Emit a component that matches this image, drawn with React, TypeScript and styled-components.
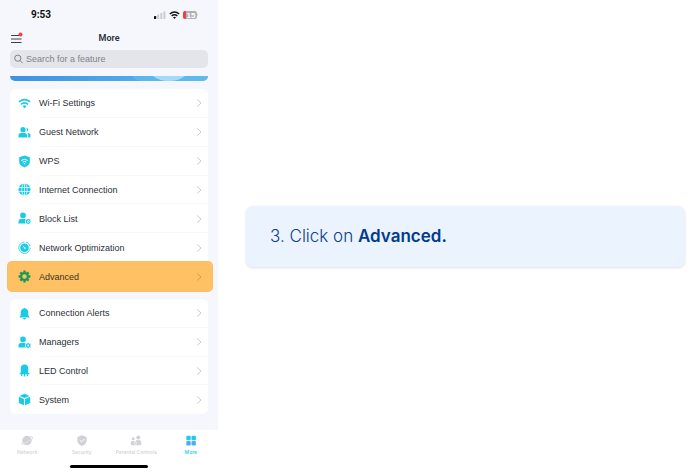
import React from "react";
import styled, { createGlobalStyle } from "styled-components";

const GlobalStyle = createGlobalStyle`
  * { box-sizing: border-box; }
  body {
    margin: 0;
    background: #fff;
    font-family: Inter, "Liberation Sans", sans-serif;
    color: #2c3038;
  }
  button, input { font: inherit; color: inherit; }
`;

const headingFont = `Roboto, "Liberation Sans", sans-serif`;
const appFont = `"Liberation Sans", Arial, sans-serif`;

const Page = styled.main`
  display: grid;
  grid-template-columns: 218px 1fr;
  column-gap: 28px;
  min-height: 100vh;
  padding-right: 3px;
`;

const Phone = styled.section`
  display: flex;
  flex-direction: column;
  background: #f5f7fc;
  font-family: ${appFont};
`;

const StatusBar = styled.div`
  display: flex;
  justify-content: space-between;
  align-items: center;
  height: 30px;
  padding: 0 19px 0 31px;
`;

const Clock = styled.span`
  font-family: ${headingFont};
  font-size: 10px;
  line-height: 12px;
  font-weight: 700;
  color: #111;
`;

const StatusIcons = styled.span`
  display: flex;
  align-items: center;
  gap: 3px;
`;

const Header = styled.header`
  display: grid;
  grid-template-columns: 1fr auto 1fr;
  align-items: center;
  height: 16px;
  margin-bottom: 4px;
  padding: 0 10px;
`;

const Title = styled.h1`
  margin: 0;
  font-family: ${headingFont};
  font-size: 9px;
  line-height: 16px;
  font-weight: 600;
`;

const MenuButton = styled.button`
  display: flex;
  width: 16px;
  padding: 0;
  border: 0;
  background: none;
`;

const SearchBox = styled.label`
  display: flex;
  align-items: center;
  gap: 3px;
  height: 18px;
  margin: 0 10px;
  padding: 0 4px;
  border-radius: 5px;
  background: #e4e5ea;
`;

const SearchInput = styled.input`
  flex: 1;
  min-width: 0;
  padding: 0;
  border: 0;
  outline: 0;
  background: none;
  font-size: 9px;
  line-height: 14px;
  &::placeholder { color: #808288; opacity: 1; }
`;

const Banner = styled.div`
  height: 5px;
  margin: 8px 10px;
  border-radius: 0 0 5px 5px;
  overflow: hidden;
  display: flex;
`;

const Card = styled.nav<{ $height: number }>`
  display: grid;
  grid-auto-rows: 1fr;
  min-height: ${(p) => p.$height}px;
  margin: 0 10px;
  border-radius: 6px;
  background: #fff;
  & + & { margin-top: 8px; }
`;

const Row = styled.button<{ $active?: boolean }>`
  position: relative;
  display: flex;
  align-items: center;
  gap: 8px;
  padding: 0 6px 0 8px;
  border: 0;
  background: none;
  text-align: left;
  font-size: 9px;
  line-height: 14px;

  &:not(:last-child)::after {
    content: "";
    position: absolute;
    left: 29px;
    right: 0;
    bottom: 0;
    height: 1px;
    background: #f7f7f9;
  }

  ${(p) =>
    p.$active &&
    `
    margin: 0 -4px 0 -2px;
    padding: 0 10px;
    border-radius: 4px;
    background: #ffc164;
    box-shadow: 0 0 0 1px #f8bd66;
    color: #3b3424;
  `}
`;

const RowLabel = styled.span`
  flex: 1;
`;

const TabBar = styled.nav`
  display: grid;
  grid-template-columns: repeat(4, 1fr);
  height: 31px;
  margin-top: auto;
  padding-top: 5px;
  background: #fff;
  font-family: Inter, sans-serif;
`;

const Tab = styled.button<{ $active?: boolean }>`
  display: flex;
  flex-direction: column;
  align-items: center;
  gap: 2px;
  padding: 0;
  border: 0;
  background: none;
  font-size: 5px;
  line-height: 8px;
  font-weight: 500;
  white-space: nowrap;
  color: ${(p) => (p.$active ? "#27c8ea" : "#d0d2d6")};
`;

const HomeArea = styled.div`
  display: flex;
  justify-content: center;
  height: 11px;
  padding-top: 4px;
  background: #fff;
`;

const HomeIndicator = styled.span`
  width: 78px;
  height: 3px;
  border-radius: 2px;
  background: #000;
`;

const Callout = styled.section`
  align-self: start;
  margin-top: 206px;
  padding: 18px 24px 19px;
  border-radius: 7px;
  background: #ebf3fe;
  box-shadow: 0 1px 3px #00000020;
`;

const Instruction = styled.p`
  margin: 0;
  font-size: 17px;
  line-height: 24px;
  font-weight: 300;
  color: #0d408c;
  strong { font-weight: 600; color: #033b8c; }
`;

const CYAN = "#19cbe5";

const WifiShape = () => (
  <g fill="none" stroke="currentColor" strokeWidth="1.6">
    <path d="M1 4.8Q6.500 0.400 12 4.800" />
    <path d="M3 7.300Q6.500 4.300 10 7.300" />
    <path d="M4.500 9L6.500 11.200L8.500 9Q6.500 7.500 4.500 9Z" fill="currentColor" stroke="none" />
  </g>
);

const Person = () => (
  <>
    <circle cx="5" cy="3.400" r="2.800" />
    <path d="M0.500 11.600V9.500Q0.500 7 3 7H7.200Q7.800 7.600 7.200 9Q6.800 10.600 7.800 11.600Z" />
  </>
);

const shapes: Record<string, React.ReactNode> = {
  wifi: <WifiShape />,
  guest: (
    <>
      <circle cx="5" cy="3.700" r="2.600" />
      <path d="M.5 11.500V9.600Q.5 7 3.200 7H6.400Q9 7 9 9.600V11.500Z" />
      <path d="M8.500 1.700A2.100 2.100 0 0 1 8.600 5.800Q9.300 3.700 8.500 1.700ZM9.500 7Q12.500 7 12.500 9.600V11.500H10.200V9.400Q10.200 7.900 9.500 7Z" />
    </>
  ),
  wps: (
    <>
      <path d="M6.500 .5L11.800 2.200V7Q11.800 10.200 6.500 12.500Q1.200 10.200 1.200 7V2.200Z" />
      <path d="M3.200 5.500Q6.500 3 9.800 5.500M4.700 7.200Q6.500 5.800 8.300 7.200" fill="none" stroke="#fff" />
      <circle cx="6.500" cy="8.700" r=".8" fill="#fff" />
    </>
  ),
  globe: (
    <>
      <circle cx="6.500" cy="6.500" r="6" />
      <g fill="none" stroke="#fff" strokeWidth=".7">
        <ellipse cx="6.500" cy="6.500" rx="2.700" ry="6.300" />
        <path d="M6.500 0V13M0 4.500H13M0 8.500H13" />
      </g>
    </>
  ),
  block: (
    <>
      <Person />
      <circle cx="10.200" cy="9.500" r="1.900" fill="none" stroke="currentColor" strokeWidth="1.100" />
      <path d="M9 8.300L11.500 10.800" stroke="currentColor" />
    </>
  ),
  optimize: (
    <>
      <circle cx="6.500" cy="6.800" r="4.300" />
      <path d="M6.500 1A5.700 5.700 0 1 0 12.200 6.800M8 1A5.800 5.800 0 0 1 12 5" fill="none" stroke="currentColor" strokeWidth=".8" />
      <path d="M4.500 4.300L7 6.300A.8 .8 0 1 1 6.200 7.300Z" fill="#fff" />
    </>
  ),
  gear: (
    <>
      <circle cx="6.500" cy="6.500" r="3.400" fill="none" stroke="currentColor" strokeWidth="2.200" />
      <path
        d="M6.500 .6V2.500M6.500 10.500V12.400M.6 6.500H2.500M10.500 6.500H12.400M2.350 2.350L3.700 3.700M9.300 9.300L10.650 10.650M2.350 10.650L3.700 9.300M9.300 3.700L10.650 2.350"
        stroke="currentColor"
        strokeWidth="2.300"
      />
    </>
  ),
  bell: (
    <>
      <path d="M5.700 1.500Q6.500 .2 7.300 1.500Q10.300 2.200 10.300 5.700V8.200L11.500 10.400H1.500L2.700 8.200V5.700Q2.700 2.200 5.700 1.500Z" />
      <path d="M4.800 11H8.200Q7.800 12.400 6.500 12.400Q5.200 12.400 4.800 11Z" />
    </>
  ),
  manager: (
    <>
      <Person />
      <circle cx="10.200" cy="9.500" r="1.700" fill="none" stroke="currentColor" strokeWidth="1.300" />
      <path d="M10.200 6.900V12.100M7.950 8.200L12.450 10.800M12.450 8.200L7.950 10.800" stroke="currentColor" strokeWidth=".9" />
      <circle cx="10.200" cy="9.500" r="1" fill="#fff" />
    </>
  ),
  led: (
    <>
      <path d="M2.800 9V4.400Q2.800 .5 6.500 .5Q10.200 .5 10.200 4.400V9H11.300V10.300H1.700V9Z" />
      <path d="M3.700 10V12M6.500 10V12.500M9.300 10V12" stroke="currentColor" strokeWidth="1.200" />
    </>
  ),
  system: (
    <>
      <path d="M6.500 .7L11.500 2.900L6.500 5.100L1.500 2.900Z" />
      <path d="M.8 3.800L6 6.100V12.300L.8 9.900ZM12.200 3.800L7 6.100V12.300L12.200 9.900Z" />
    </>
  ),
};

const RowIcon = ({ name, color = CYAN }: { name: string; color?: string }) => (
  <svg width="13" height="13" viewBox="0 0 13 13" fill="currentColor" color={color} aria-hidden="true">
    {shapes[name]}
  </svg>
);

const Chevron = ({ color = "#c9cbd0" }: { color?: string }) => (
  <svg width="6" height="8" viewBox="0 0 6 8" fill="none" stroke={color} aria-hidden="true">
    <path d="M1.200 .5L5 4L1.200 7.500" />
  </svg>
);

const MenuIcon = () => (
  <svg width="14" height="12" viewBox="0 0 14 12" aria-hidden="true">
    <path d="M1 3.500H11.500M1 7H11.500M1 10.500H11.500" stroke="#3f4248" strokeWidth="1.200" />
    <circle cx="10.500" cy="2.500" r="2" fill="#fa3d3d" />
  </svg>
);

const SearchIcon = () => (
  <svg width="9" height="10" viewBox="0 0 9 10" fill="none" stroke="#7d7f86" aria-hidden="true">
    <circle cx="3.800" cy="4.200" r="3.100" />
    <path d="M6.100 6.500L8.700 9.200" />
  </svg>
);

const SignalIcon = () => (
  <svg width="12" height="8" viewBox="0 0 12 8" aria-hidden="true">
    <rect x="0" y="5" width="2.200" height="3" rx=".6" fill="#111" />
    <path d="M4.200 3.500V8M7.300 2V8M10.400 .5V8" stroke="#cbccd0" strokeWidth="2" />
  </svg>
);

const StatusWifi = () => (
  <svg width="11" height="8" viewBox="0 0 11 8" fill="none" stroke="#111" aria-hidden="true">
    <path d="M.8 3Q5.500 -1 10.200 3" strokeWidth="1.600" />
    <path d="M2.600 5Q5.500 2.500 8.400 5" strokeWidth="1.400" />
    <path d="M4 6.200L5.500 7.900L7 6.200Q5.500 5.200 4 6.200Z" fill="#111" stroke="none" />
  </svg>
);

const Battery = () => (
  <svg width="16" height="8" viewBox="0 0 16 8" aria-label="Battery 15 percent">
    <rect width="14" height="8" rx="2.300" fill="#b0b1b5" />
    <path d="M2.300 0H2.800V8H2.300Q0 8 0 5.700V2.300Q0 0 2.300 0Z" fill="#fa3434" />
    <path d="M14.700 2.700Q15.700 4 14.700 5.300Z" fill="#b0b1b5" />
    <text x="8" y="7" textAnchor="middle" fontSize="8" fontWeight="700" fill="#fff">15</text>
  </svg>
);

const BannerArt = () => (
  <svg width="100%" height="5" viewBox="0 0 198 5" preserveAspectRatio="none" aria-hidden="true">
    <defs>
      <linearGradient id="sky">
        <stop offset="0" stopColor="#3f91e2" />
        <stop offset="1" stopColor="#5bb8ee" />
      </linearGradient>
    </defs>
    <rect width="198" height="5" fill="url(#sky)" />
    <path d="M122 0H198V5H130Q124 3 122 0Z" fill="#64bcef" opacity=".6" />
    <path d="M143 0H175Q169 5 159 5Q149 5 143 0Z" fill="#a5daf7" />
  </svg>
);

const tabShapes: Record<string, React.ReactNode> = {
  Network: (
    <>
      <circle cx="6" cy="5.500" r="4.700" />
      <path d="M1 8.600Q4 9.200 8 6.300Q11.500 3.700 11 1.600" fill="none" stroke="#fff" strokeWidth=".6" />
      <path d="M1.200 7.300Q-.4 9.700 2.500 9.300Q6 8.800 9.500 5.800Q12.500 3.100 11.200 1.700Q10.600 1.200 9.300 1.700" fill="none" stroke="currentColor" strokeWidth=".8" />
    </>
  ),
  Security: (
    <>
      <path d="M6 .3L10.600 1.900V6Q10.600 9 6 10.900Q1.400 9 1.400 6V1.900Z" />
      <path d="M3.900 5.300L5.500 6.800L8.300 4" fill="none" stroke="#fff" />
    </>
  ),
  "Parental Controls": (
    <>
      <circle cx="3.200" cy="3.700" r="1.500" />
      <circle cx="8.300" cy="2.400" r="2" />
      <path d="M.8 10.300V7.800Q.8 6 2.300 6H3.500Q4.900 6 5 7.400Q5.500 5 8.300 5Q11.300 5 11.300 8.200V10.300Z" />
      <circle cx="5.500" cy="8.300" r="1.100" stroke="#fff" strokeWidth=".5" />
    </>
  ),
  More: (
    <>
      <rect x="1.300" y=".8" width="4.400" height="4.400" rx="1" />
      <rect x="6.500" y=".8" width="4.400" height="4.400" rx="1" />
      <rect x="1.300" y="6" width="4.400" height="4.400" rx="1" fill="#48aefb" />
      <rect x="6.500" y="6" width="4.400" height="4.400" rx="1" fill="#48aefb" />
    </>
  ),
};

const TabIcon = ({ name }: { name: string }) => (
  <svg width="12" height="11" viewBox="0 0 12 11" fill="currentColor" aria-hidden="true">
    {tabShapes[name]}
  </svg>
);

type Item = { icon: string; label: string; active?: boolean };

const networkItems: Item[] = [
  { icon: "wifi", label: "Wi-Fi Settings" },
  { icon: "guest", label: "Guest Network" },
  { icon: "wps", label: "WPS" },
  { icon: "globe", label: "Internet Connection" },
  { icon: "block", label: "Block List" },
  { icon: "optimize", label: "Network Optimization" },
  { icon: "gear", label: "Advanced", active: true },
];

const systemItems: Item[] = [
  { icon: "bell", label: "Connection Alerts" },
  { icon: "manager", label: "Managers" },
  { icon: "led", label: "LED Control" },
  { icon: "system", label: "System" },
];

const MenuCard = ({ items, height, label }: { items: Item[]; height: number; label: string }) => (
  <Card $height={height} aria-label={label}>
    {items.map((item) => (
      <Row key={item.label} $active={item.active}>
        <RowIcon name={item.icon} color={item.active ? "#159b55" : CYAN} />
        <RowLabel>{item.label}</RowLabel>
        <Chevron color={item.active ? "#d2a052" : undefined} />
      </Row>
    ))}
  </Card>
);

export default function App() {
  return (
    <>
      <GlobalStyle />
      <Page>
        <Phone>
          <StatusBar>
            <Clock>9:53</Clock>
            <StatusIcons>
              <SignalIcon />
              <StatusWifi />
              <Battery />
            </StatusIcons>
          </StatusBar>
          <Header>
            <MenuButton aria-label="Menu"><MenuIcon /></MenuButton>
            <Title>More</Title>
          </Header>
          <SearchBox>
            <SearchIcon />
            <SearchInput type="text" placeholder="Search for a feature" aria-label="Search for a feature" />
          </SearchBox>
          <Banner><BannerArt /></Banner>
          <MenuCard items={networkItems} height={202} label="Network features" />
          <MenuCard items={systemItems} height={115} label="System features" />
          <TabBar aria-label="Main">
            {Object.keys(tabShapes).map((name) => (
              <Tab key={name} $active={name === "More"}>
                <TabIcon name={name} />
                {name}
              </Tab>
            ))}
          </TabBar>
          <HomeArea><HomeIndicator /></HomeArea>
        </Phone>
        <Callout>
          <Instruction>3. Click on <strong>Advanced.</strong></Instruction>
        </Callout>
      </Page>
    </>
  );
}
